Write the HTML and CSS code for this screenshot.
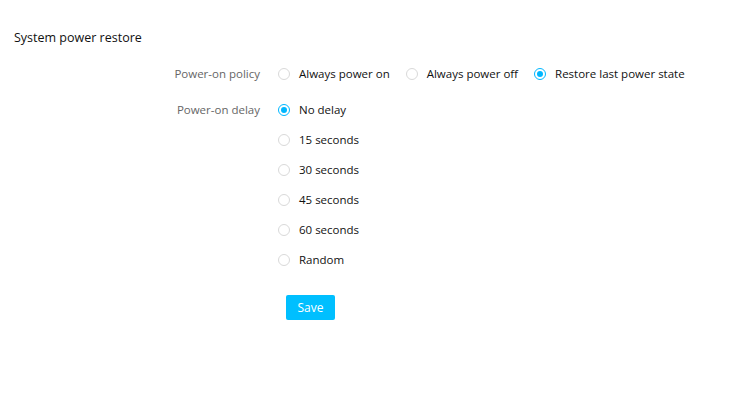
FILE: index.html
```html
<!DOCTYPE html>
<html>
<head>
<meta charset="utf-8">
<link rel="stylesheet" href="styles.css">
</head>
<body>
<div class="page">
  <div class="title">System power restore</div>
  <div class="form">
    <div class="row">
      <div class="label">Power-on policy</div>
      <div class="options inline">
        <label class="opt"><span class="radio"></span><span>Always power on</span></label>
        <label class="opt"><span class="radio"></span><span>Always power off</span></label>
        <label class="opt"><span class="radio on"></span><span>Restore last power state</span></label>
      </div>
    </div>
    <div class="row delay">
      <div class="label">Power-on delay</div>
      <div class="options stack">
        <label class="opt"><span class="radio on"></span><span>No delay</span></label>
        <label class="opt"><span class="radio"></span><span>15 seconds</span></label>
        <label class="opt"><span class="radio"></span><span>30 seconds</span></label>
        <label class="opt"><span class="radio"></span><span>45 seconds</span></label>
        <label class="opt"><span class="radio"></span><span>60 seconds</span></label>
        <label class="opt"><span class="radio"></span><span>Random</span></label>
      </div>
    </div>
    <div class="row buttons">
      <div class="label"></div>
      <div class="actions"><button class="save">Save</button></div>
    </div>
  </div>
</div>
</body>
</html>
```
FILE: styles.css
```css
html, body { margin: 0; padding: 0; background: #fff; }
body { font-family: "Open Sans", "DejaVu Sans", sans-serif; font-size: 11.5px; color: #000; }
.page { padding: 29px 14px 0 14px; }
.title { font-size: 12.5px; line-height: 18px; color: #111; }
.form { margin-top: 15px; display: flex; flex-direction: column; }
.row { display: grid; grid-template-columns: 246px 1fr; column-gap: 18px; align-items: start; }
.row.delay { margin-top: 13px; }
.row.buttons { margin-top: 24px; }
.label { text-align: right; color: #666; line-height: 23px; }
.options.inline { display: flex; gap: 16px; }
.options.stack { display: flex; flex-direction: column; gap: 7px; }
.opt { display: flex; align-items: center; gap: 9px; height: 23px; line-height: 23px; color: #111; }
.radio { width: 10px; height: 10px; border: 1px solid #d9d9d9; border-radius: 50%; box-sizing: content-box; position: relative; flex: none; }
.radio.on { border-color: #00b7ff; }
.radio.on::after { content: ""; position: absolute; left: 2px; top: 2px; width: 6px; height: 6px; border-radius: 50%; background: #00b7ff; }
.save { margin-left: 8px; width: 49px; height: 25px; border: none; border-radius: 2px; background: #00bfff; color: #fff; font-family: inherit; font-size: 12px; padding: 0; display: block; }
```
